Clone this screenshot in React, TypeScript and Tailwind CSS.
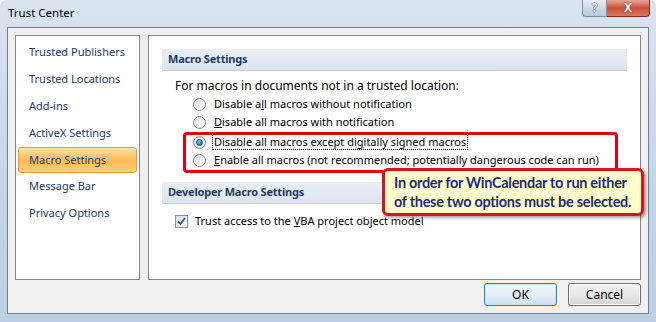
import type { ReactNode } from 'react';

const FONT = { fontFamily: '"Noto Sans", "Open Sans", sans-serif' };

const NAV_ITEMS = [
  'Trusted Publishers',
  'Trusted Locations',
  'Add-ins',
  'ActiveX Settings',
  'Macro Settings',
  'Message Bar',
  'Privacy Options',
];

function Radio({ checked = false }: { checked?: boolean }) {
  return (
    <span className="relative flex h-[13px] w-[13px] shrink-0 items-center justify-center rounded-full border border-[#8e8f8f] bg-gradient-to-br from-[#d7d7d7] to-[#f7f7f7]">
      <span className="h-[9px] w-[9px] rounded-full bg-gradient-to-br from-[#e3e3e3] to-[#fafafa]" />
      {checked && (
        <span className="absolute h-[7px] w-[7px] rounded-full border border-[#14507d] bg-[radial-gradient(circle_at_40%_35%,#8fd3f5,#1d7fc1_60%,#0d4f86)]" />
      )}
    </span>
  );
}

function Option({ checked, children }: { checked?: boolean; children: ReactNode }) {
  return (
    <div className="flex h-[18px] items-center gap-[6px] pl-[31px] text-[11px]">
      <Radio checked={checked} />
      <span
        className={
          checked
            ? 'whitespace-nowrap border border-dotted border-black px-px leading-[14px]'
            : 'whitespace-nowrap border border-transparent px-px leading-[14px]'
        }
      >
        {children}
      </span>
    </div>
  );
}

function SectionBar({ children }: { children: ReactNode }) {
  return (
    <div className="flex h-[22px] items-center border-b border-[#c5cdd6] bg-gradient-to-b from-[#e9eef4] to-[#dde5ee] pl-[6px] text-[11px] font-bold tracking-[-0.2px] text-[#1e3b63]">
      {children}
    </div>
  );
}

export default function App() {
  return (
    <div
      className="relative h-[322px] w-[656px] overflow-hidden rounded-t-[6px] bg-gradient-to-b from-[#d9e4ef] via-[#c8d7e7] to-[#bccee2] text-[12px] text-black"
      style={FONT}
    >
      {/* Title bar */}
      <div className="flex h-[27px] items-start justify-between">
        <span className="pl-[8px] pt-[5px] text-[11.5px] leading-[16px]">Trust Center</span>
        <div className="mr-[6px] flex">
          <div className="flex h-[17px] w-[25px] items-center justify-center rounded-bl-[4px] border border-t-0 border-[#7f8ea3] bg-gradient-to-b from-[#e9eef5] via-[#cfd9e6] to-[#b9c8da] text-[12px] font-bold leading-none text-[#f4f6f9] [text-shadow:0_0_1px_#4a5566,0_0_1px_#4a5566]">
            ?
          </div>
          <div className="flex h-[17px] w-[43px] items-center justify-center rounded-br-[4px] border border-l-0 border-t-0 border-[#7a2d22] bg-gradient-to-b from-[#e7a596] via-[#c9503a] to-[#d8775f] text-[12px] font-bold leading-none text-white [text-shadow:0_0_1px_#5b1a10,0_0_1px_#5b1a10]">
            X
          </div>
        </div>
      </div>

      {/* Client area */}
      <div className="mx-[7px] flex h-[287px] flex-col border border-[#6f7f93] bg-[#f0f0f0] px-[7px] pt-[7px]">
        <div className="flex h-[245px] gap-[8px]">
          {/* Navigation list */}
          <div className="flex w-[125px] flex-col border border-[#828790] bg-white px-[1px] pt-[3px] text-[11px]">
            {NAV_ITEMS.map((item) =>
              item === 'Macro Settings' ? (
                <div
                  key={item}
                  className="mx-[1px] flex h-[26px] items-center rounded-[3px] border border-[#e3a043] bg-gradient-to-b from-[#ffe2a4] via-[#ffbb55] to-[#ffd07a] pl-[10px] text-[#1e3b63]"
                >
                  {item}
                </div>
              ) : (
                <div key={item} className="flex h-[27px] items-center pl-[12px] text-[#1e3b63]">
                  {item}
                </div>
              )
            )}
          </div>

          {/* Settings panel */}
          <div className="flex flex-1 flex-col border border-[#828790] bg-white px-[13px] pt-[13px]">
            <SectionBar>Macro Settings</SectionBar>
            <div className="whitespace-nowrap pl-[13px] pt-[7px] leading-[16px]">
              For macros in documents not in a trusted location:
            </div>
            <div className="mt-[1px] flex flex-col">
              <Option>
                Disable a<u>l</u>l macros without notification
              </Option>
              <Option>
                <u>D</u>isable all macros with notification
              </Option>
              <div className="h-[2px]" />
              <Option checked>
                Disable all macros except di<u>g</u>itally signed macros
              </Option>
              <Option>
                <u>E</u>nable all macros (not recommended; potentially dangerous code can run)
              </Option>
            </div>
            <div className="mt-[13px]">
              <SectionBar>Developer Macro Settings</SectionBar>
            </div>
            <div className="mt-[9px] flex items-center gap-[7px] pl-[13px] text-[11px]">
              <span className="flex h-[13px] w-[13px] items-center justify-center border border-[#8e8f8f] bg-gradient-to-br from-[#dcdcdc] to-[#fbfbfb]">
                <svg width="9" height="9" viewBox="0 0 9 9">
                  <path d="M1 4.5 L3.5 7 L8 1" fill="none" stroke="#2f5f9e" strokeWidth="1.8" />
                </svg>
              </span>
              <span>
                Trust access to the <u>V</u>BA project object model
              </span>
            </div>
          </div>
        </div>

        {/* Buttons */}
        <div className="mt-[3px] flex justify-end gap-[11px]">
          <button className="h-[23px] w-[73px] rounded-[3px] border border-[#3c7fb1] bg-gradient-to-b from-[#f4f9fd] via-[#e3eef7] to-[#cfe2f0] text-[12px] shadow-[inset_0_0_0_1px_#bde4f7]">
            OK
          </button>
          <button className="h-[23px] w-[73px] rounded-[3px] border border-[#707070] bg-gradient-to-b from-[#f2f2f2] via-[#e8e8e8] to-[#d4d4d4] text-[12px] shadow-[inset_0_0_0_1px_#fcfcfc]">
            Cancel
          </button>
        </div>
      </div>

      {/* Annotation: red highlight box */}
      <div className="absolute left-[183px] top-[132px] h-[41px] w-[435px] rounded-[4px] border-[3px] border-[#e0000f]" />

      {/* Annotation: callout */}
      <div
        className="absolute left-[382px] top-[168px] flex h-[48px] w-[262px] flex-col justify-center rounded-[6px] border-[3px] border-[#d9141c] bg-[#ffffcc] pl-[9px] text-[14.5px] font-bold leading-[19px] tracking-[-0.3px] text-[#1f2b78] shadow-[2px_2px_3px_rgba(0,0,0,0.35)]"
        style={{ fontFamily: '"Lato", "Noto Sans", sans-serif' }}
      >
        <div className="whitespace-nowrap">In order for WinCalendar to run either</div>
        <div className="whitespace-nowrap">of these two options must be selected.</div>
      </div>
    </div>
  );
}
